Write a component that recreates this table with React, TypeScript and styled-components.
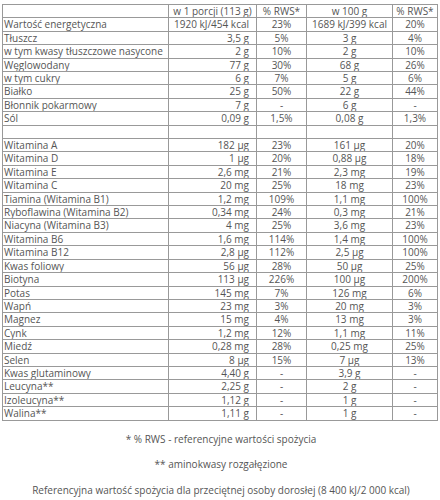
import React from "react";
import styled, { createGlobalStyle } from "styled-components";

const Global = createGlobalStyle`
  html, body { margin: 0; padding: 0; background: #fff; }
  body { font-family: "Open Sans", "Liberation Sans", sans-serif; color: #555; }
`;

const Page = styled.div`
  width: 440px;
  padding: 4px 0 0 2px;
  box-sizing: border-box;
`;

const Table = styled.table`
  width: 435px;
  table-layout: fixed;
  border-collapse: collapse;
  border: 1px solid #333;
  font-size: 10px;
`;

const Col = styled.col<{ $w: number }>`
  width: ${(p) => p.$w}px;
`;

const Cell = styled.td<{ $align: "left" | "right" | "center" }>`
  border: 1px solid #999;
  padding: 0 ${(p) => (p.$align === "right" ? "7px" : "1px")} 0 1px;
  height: 12.4px;
  line-height: 12.4px;
  text-align: ${(p) => p.$align};
  white-space: nowrap;
  overflow: hidden;
  color: #555;
`;

const Notes = styled.div`
  display: flex;
  flex-direction: column;
  gap: 10px;
  padding-top: 11px;
  font-size: 10px;
  line-height: 15.5px;
  text-align: center;
  color: #555;
`;

const Note = styled.p`
  margin: 0;
`;

type Row = [string, string, string, string, string];

const rows: Row[] = [
  ["", "w 1 porcji (113 g)", "% RWS*", "w 100 g", "% RWS*"],
  ["Wartość energetyczna", "1920 kJ/454 kcal", "23%", "1689 kJ/399 kcal", "20%"],
  ["Tłuszcz", "3,5 g", "5%", "3 g", "4%"],
  ["w tym kwasy tłuszczowe nasycone", "2 g", "10%", "2 g", "10%"],
  ["Węglowodany", "77 g", "30%", "68 g", "26%"],
  ["w tym cukry", "6 g", "7%", "5 g", "6%"],
  ["Białko", "25 g", "50%", "22 g", "44%"],
  ["Błonnik pokarmowy", "7 g", "-", "6 g", "-"],
  ["Sól", "0,09 g", "1,5%", "0,08 g", "1,3%"],
  ["", "", "", "", ""],
  ["Witamina A", "182 µg", "23%", "161 µg", "20%"],
  ["Witamina D", "1 µg", "20%", "0,88 µg", "18%"],
  ["Witamina E", "2,6 mg", "21%", "2,3 mg", "19%"],
  ["Witamina C", "20 mg", "25%", "18 mg", "23%"],
  ["Tiamina (Witamina B1)", "1,2 mg", "109%", "1,1 mg", "100%"],
  ["Ryboflawina (Witamina B2)", "0,34 mg", "24%", "0,3 mg", "21%"],
  ["Niacyna (Witamina B3)", "4 mg", "25%", "3,6 mg", "23%"],
  ["Witamina B6", "1,6 mg", "114%", "1,4 mg", "100%"],
  ["Witamina B12", "2,8 µg", "112%", "2,5 µg", "100%"],
  ["Kwas foliowy", "56 µg", "28%", "50 µg", "25%"],
  ["Biotyna", "113 µg", "226%", "100 µg", "200%"],
  ["Potas", "145 mg", "7%", "126 mg", "6%"],
  ["Wapń", "23 mg", "3%", "20 mg", "3%"],
  ["Magnez", "15 mg", "4%", "13 mg", "3%"],
  ["Cynk", "1,2 mg", "12%", "1,1 mg", "11%"],
  ["Miedź", "0,28 mg", "28%", "0,25 mg", "25%"],
  ["Selen", "8 µg", "15%", "7 µg", "13%"],
  ["Kwas glutaminowy", "4,40 g", "-", "3,9 g", "-"],
  ["Leucyna**", "2,25 g", "-", "2 g", "-"],
  ["Izoleucyna**", "1,12 g", "-", "1 g", "-"],
  ["Walina**", "1,11 g", "-", "1 g", "-"],
];

const widths = [166, 88, 50, 86, 45];
const aligns: ("left" | "right" | "center")[] = ["left", "right", "center", "center", "center"];

export default function App() {
  return (
    <Page>
      <Global />
      <Table>
        <colgroup>
          {widths.map((w, i) => (
            <Col key={i} $w={w} />
          ))}
        </colgroup>
        <tbody>
          {rows.map((r, i) => (
            <tr key={i}>
              {r.map((c, j) => (
                <Cell key={j} $align={i === 0 && j === 1 ? "center" : aligns[j]}>
                  {c}
                </Cell>
              ))}
            </tr>
          ))}
        </tbody>
      </Table>
      <Notes>
        <Note>* % RWS - referencyjne wartości spożycia</Note>
        <Note>** aminokwasy rozgałęzione</Note>
        <Note>Referencyjna wartość spożycia dla przeciętnej osoby dorosłej (8 400 kJ/2 000 kcal)</Note>
      </Notes>
    </Page>
  );
}
